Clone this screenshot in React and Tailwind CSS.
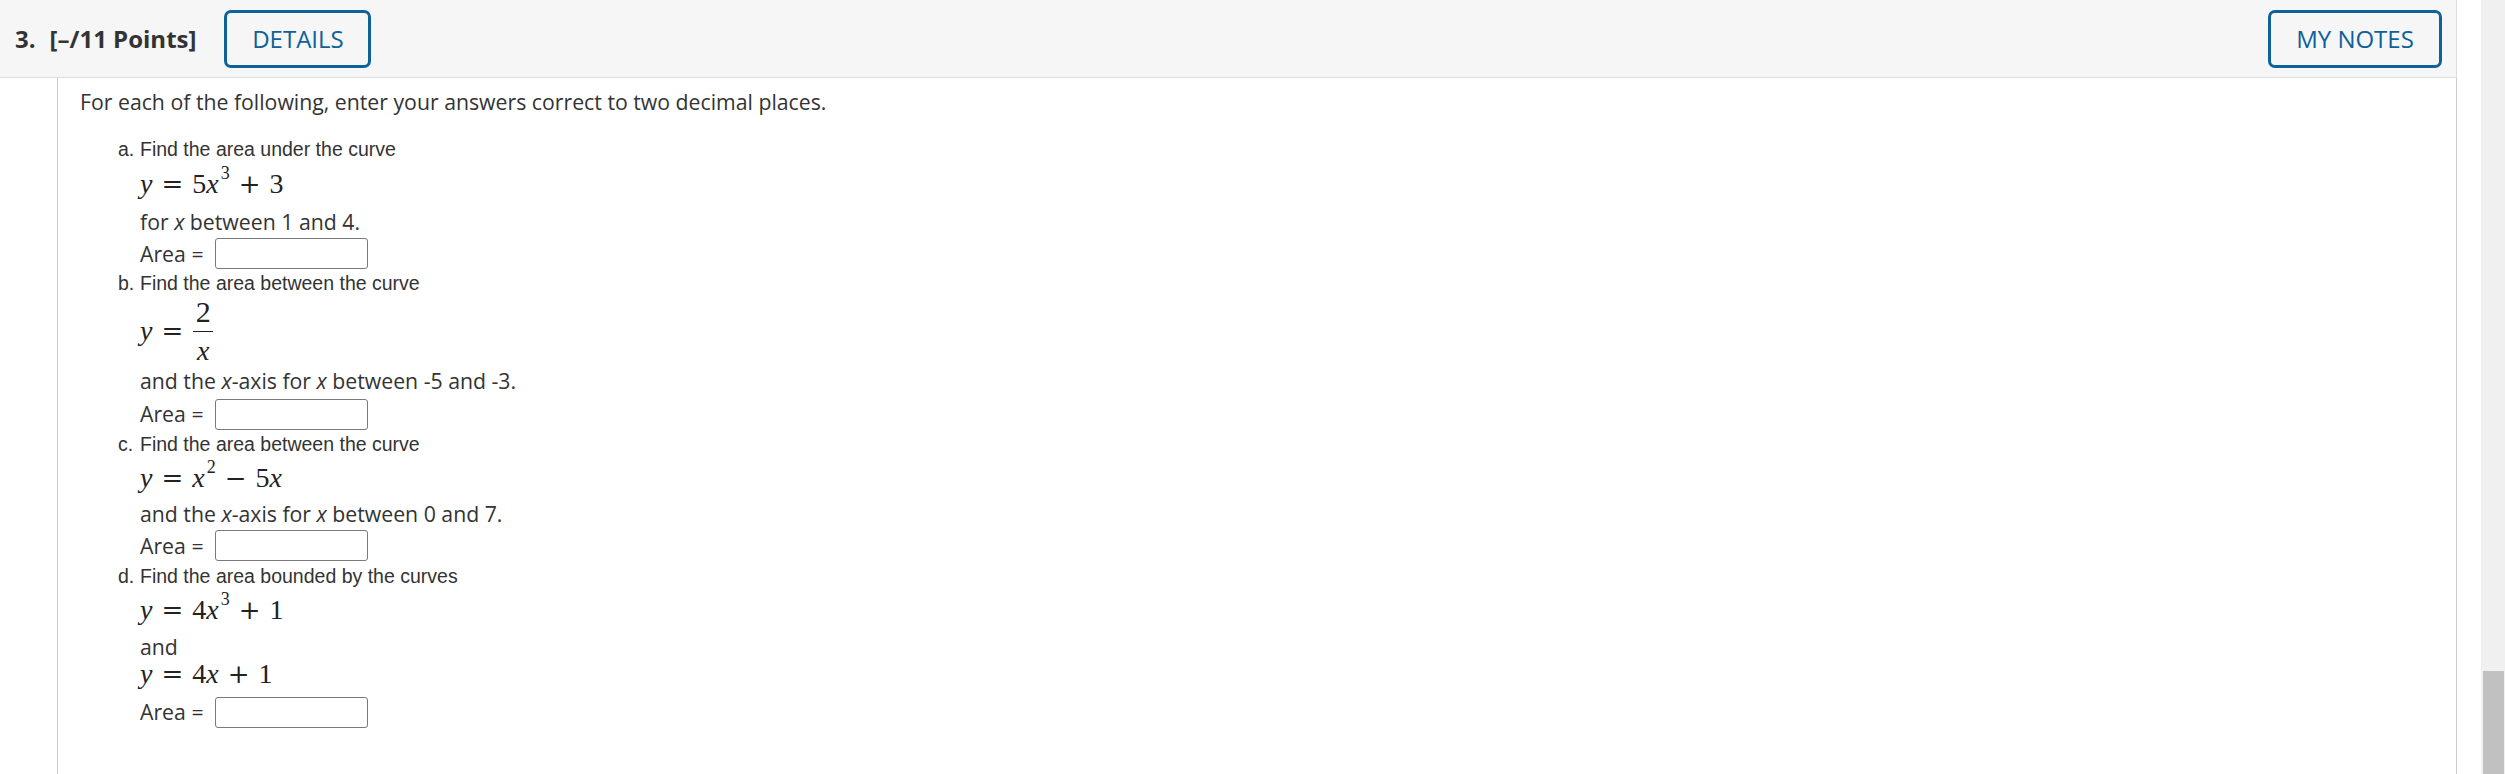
import React from "react";

function M({ children, className = "" }) {
  return (
    <span className={`font-['Liberation_Serif',serif] text-[28px] leading-none text-[#222] ${className}`}>
      {children}
    </span>
  );
}

function V({ children }) {
  return <span className="italic">{children}</span>;
}

function Sup({ children }) {
  return <sup className="text-[18px] -top-[14px] ml-[2px]">{children}</sup>;
}

function Op({ children }) {
  return <span className="font-['DejaVu_Serif',serif] text-[26px] mx-[9px]">{children}</span>;
}

function AreaRow({ h }) {
  return (
    <div className={`flex items-center ${h} font-['Open_Sans',sans-serif] text-[21.25px] text-[#333]`}>
      <span>Area =</span>
      <span className="ml-[11px] w-[153px] h-[31px] border border-[#7a7a7a] rounded-[3px] bg-white" />
    </div>
  );
}

function Item({ mark, title, h, children }) {
  return (
    <>
      <div className={`flex items-center ${h} font-['Liberation_Sans',Arial,sans-serif] text-[19.5px] text-[#333] -ml-[22px]`}>
        <span className="w-[22px]">{mark}</span>
        <span>{title}</span>
      </div>
      {children}
    </>
  );
}

function Line({ h, children }) {
  return (
    <div className={`flex items-center ${h} font-['Open_Sans',sans-serif] text-[21.25px] text-[#333]`}>
      {children}
    </div>
  );
}

export default function App() {
  return (
    <div className="w-[2505px] h-[774px] flex bg-white overflow-hidden">
      <div className="w-[2457px] flex flex-col">
        <div className="h-[78px] bg-[#f6f6f6] border-b border-r border-[#dddddd] flex items-center justify-between pl-[15px] pr-[14px] flex-shrink-0">
          <div className="flex items-center">
            <span className="font-['Open_Sans',sans-serif] font-bold text-[24px] text-[#333]">3.</span>
            <span className="ml-[14px] font-['Open_Sans',sans-serif] font-bold text-[24px] text-[#333]">[–/11 Points]</span>
            <button className="ml-[28px] w-[147px] h-[58px] border-[3px] border-[#0e6199] rounded-[7px] font-['Open_Sans',sans-serif] text-[24px] text-[#0e6199]">
              DETAILS
            </button>
          </div>
          <button className="w-[174px] h-[58px] border-[3px] border-[#0e6199] rounded-[7px] font-['Open_Sans',sans-serif] text-[24px] text-[#0e6199]">
            MY NOTES
          </button>
        </div>

        <div className="flex-1 ml-[57px] border-l border-r border-[#cccccc] pl-[22px] pt-[10px]">
          <div className="h-[28px] flex items-center font-['Open_Sans',sans-serif] text-[21.25px] text-[#333]">
            For each of the following, enter your answers correct to two decimal places.
          </div>

          <div className="mt-[20px] ml-[60px] flex flex-col">
            <Item mark="a." title="Find the area under the curve" h="h-[28px]">
              <div className="h-[40px] flex items-center">
                <M><V>y</V><Op>=</Op>5<V>x</V><Sup>3</Sup><Op>+</Op>3</M>
              </div>
              <Line h="h-[35px]">for&nbsp;<span className="italic">x</span>&nbsp;between 1 and 4.</Line>
              <AreaRow h="h-[29px]" />
            </Item>

            <Item mark="b." title="Find the area between the curve" h="h-[31px]">
              <div className="h-[64px] flex items-center">
                <M className="flex items-center">
                  <V>y</V>
                  <Op>=</Op>
                  <span className="inline-flex flex-col items-center ml-[1px]">
                    <span className="pb-[4px] text-[30px]">2</span>
                    <span className="w-[20px] h-[1.5px] bg-[#222]" />
                    <span className="italic pt-[5px]">x</span>
                  </span>
                </M>
              </div>
              <Line h="h-[36px]">
                and the&nbsp;<span className="italic">x</span>-axis for&nbsp;<span className="italic">x</span>&nbsp;between -5 and -3.
              </Line>
              <AreaRow h="h-[30px]" />
            </Item>

            <Item mark="c." title="Find the area between the curve" h="h-[31px]">
              <div className="h-[36px] flex items-center">
                <M><V>y</V><Op>=</Op><V>x</V><Sup>2</Sup><Op>−</Op>5<V>x</V></M>
              </div>
              <Line h="h-[35px]">
                and the&nbsp;<span className="italic">x</span>-axis for&nbsp;<span className="italic">x</span>&nbsp;between 0 and 7.
              </Line>
              <AreaRow h="h-[29px]" />
            </Item>

            <Item mark="d." title="Find the area bounded by the curves" h="h-[33px]">
              <div className="h-[34px] flex items-center">
                <M><V>y</V><Op>=</Op>4<V>x</V><Sup>3</Sup><Op>+</Op>1</M>
              </div>
              <Line h="h-[40px]">and</Line>
              <div className="h-[14px] flex items-center">
                <M><V>y</V><Op>=</Op>4<V>x</V><Op>+</Op>1</M>
              </div>
              <AreaRow h="h-[62px]" />
            </Item>
          </div>
        </div>
      </div>

      <div className="w-[24px]" />
      <div className="w-[24px] bg-[#f0f0f0] flex flex-col justify-end items-center">
        <div className="w-[21px] h-[103px] bg-[#c1c1c1]" />
      </div>
    </div>
  );
}
